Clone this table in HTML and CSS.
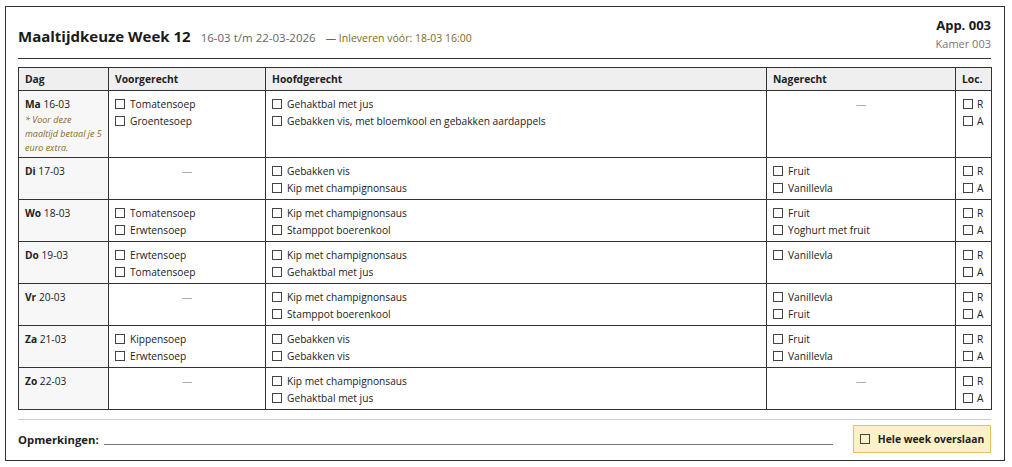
FILE: index.html
```html
<!DOCTYPE html>
<html lang="nl">
<head>
<meta charset="utf-8">
<title>Maaltijdkeuze Week 12</title>
<link rel="stylesheet" href="styles.css">
</head>
<body>
<div class="sheet">
  <header class="head">
    <div class="head-left">
      <h1 class="title">Maaltijdkeuze Week 12</h1>
      <span class="range">16-03 t/m 22-03-2026</span>
      <span class="deadline">— Inleveren vóór: 18-03 16:00</span>
    </div>
    <div class="head-right">
      <div class="app">App. 003</div>
      <div class="room">Kamer 003</div>
    </div>
  </header>

  <table class="menu">
    <colgroup>
      <col class="c-day"><col class="c-voor"><col class="c-hoofd"><col class="c-na"><col class="c-loc">
    </colgroup>
    <thead>
      <tr><th>Dag</th><th>Voorgerecht</th><th>Hoofdgerecht</th><th>Nagerecht</th><th>Loc.</th></tr>
    </thead>
    <tbody>
      <tr>
        <td class="day"><b>Ma</b> 16-03<div class="note">* Voor deze maaltijd betaal je 5 euro extra.</div></td>
        <td><div class="opt"><span class="box"></span>Tomatensoep</div><div class="opt"><span class="box"></span>Groentesoep</div></td>
        <td><div class="opt"><span class="box"></span>Gehaktbal met jus</div><div class="opt"><span class="box"></span>Gebakken vis, met bloemkool en gebakken aardappels</div></td>
        <td class="empty">—</td>
        <td class="loc"><div class="opt"><span class="box"></span>R</div><div class="opt"><span class="box"></span>A</div></td>
      </tr>
      <tr>
        <td class="day"><b>Di</b> 17-03</td>
        <td class="empty">—</td>
        <td><div class="opt"><span class="box"></span>Gebakken vis</div><div class="opt"><span class="box"></span>Kip met champignonsaus</div></td>
        <td><div class="opt"><span class="box"></span>Fruit</div><div class="opt"><span class="box"></span>Vanillevla</div></td>
        <td class="loc"><div class="opt"><span class="box"></span>R</div><div class="opt"><span class="box"></span>A</div></td>
      </tr>
      <tr>
        <td class="day"><b>Wo</b> 18-03</td>
        <td><div class="opt"><span class="box"></span>Tomatensoep</div><div class="opt"><span class="box"></span>Erwtensoep</div></td>
        <td><div class="opt"><span class="box"></span>Kip met champignonsaus</div><div class="opt"><span class="box"></span>Stamppot boerenkool</div></td>
        <td><div class="opt"><span class="box"></span>Fruit</div><div class="opt"><span class="box"></span>Yoghurt met fruit</div></td>
        <td class="loc"><div class="opt"><span class="box"></span>R</div><div class="opt"><span class="box"></span>A</div></td>
      </tr>
      <tr>
        <td class="day"><b>Do</b> 19-03</td>
        <td><div class="opt"><span class="box"></span>Erwtensoep</div><div class="opt"><span class="box"></span>Tomatensoep</div></td>
        <td><div class="opt"><span class="box"></span>Kip met champignonsaus</div><div class="opt"><span class="box"></span>Gehaktbal met jus</div></td>
        <td><div class="opt"><span class="box"></span>Vanillevla</div></td>
        <td class="loc"><div class="opt"><span class="box"></span>R</div><div class="opt"><span class="box"></span>A</div></td>
      </tr>
      <tr>
        <td class="day"><b>Vr</b> 20-03</td>
        <td class="empty">—</td>
        <td><div class="opt"><span class="box"></span>Kip met champignonsaus</div><div class="opt"><span class="box"></span>Stamppot boerenkool</div></td>
        <td><div class="opt"><span class="box"></span>Vanillevla</div><div class="opt"><span class="box"></span>Fruit</div></td>
        <td class="loc"><div class="opt"><span class="box"></span>R</div><div class="opt"><span class="box"></span>A</div></td>
      </tr>
      <tr>
        <td class="day"><b>Za</b> 21-03</td>
        <td><div class="opt"><span class="box"></span>Kippensoep</div><div class="opt"><span class="box"></span>Erwtensoep</div></td>
        <td><div class="opt"><span class="box"></span>Gebakken vis</div><div class="opt"><span class="box"></span>Gebakken vis</div></td>
        <td><div class="opt"><span class="box"></span>Fruit</div><div class="opt"><span class="box"></span>Vanillevla</div></td>
        <td class="loc"><div class="opt"><span class="box"></span>R</div><div class="opt"><span class="box"></span>A</div></td>
      </tr>
      <tr>
        <td class="day"><b>Zo</b> 22-03</td>
        <td class="empty">—</td>
        <td><div class="opt"><span class="box"></span>Kip met champignonsaus</div><div class="opt"><span class="box"></span>Gehaktbal met jus</div></td>
        <td class="empty">—</td>
        <td class="loc"><div class="opt"><span class="box"></span>R</div><div class="opt"><span class="box"></span>A</div></td>
      </tr>
    </tbody>
  </table>

  <footer class="foot">
    <span class="rem-label">Opmerkingen:</span>
    <span class="rem-line"></span>
    <div class="skip"><span class="box"></span>Hele week overslaan</div>
  </footer>
</div>
</body>
</html>
```
FILE: styles.css
```css
* { box-sizing: border-box; }
html, body { margin: 0; padding: 0; background: #fff; }
body {
  font-family: "Open Sans", "Noto Sans", sans-serif;
  color: #222;
  font-size: 10.2px;
}
.sheet {
  margin: 6px 0 0 5px;
  width: 1000px;
  height: 455px;
  border: 1px solid #333;
  padding: 0 13px 0 12px;
  display: flex;
  flex-direction: column;
}
.head {
  display: flex;
  justify-content: space-between;
  align-items: flex-start;
  border-bottom: 1px solid #333;
  height: 52px;
  flex: none;
}
.head-left {
  display: flex;
  align-items: baseline;
  gap: 10px;
  padding-top: 19px;
}
.title {
  margin: 0;
  font-size: 15px;
  font-weight: 700;
  color: #1a1a1a;
}
.range { font-size: 11.5px; color: #666; }
.deadline { font-size: 10.5px; color: #7f6a1c; }
.head-right {
  text-align: right;
  padding-top: 9px;
}
.app { font-size: 13px; font-weight: 700; line-height: 18px; color: #1a1a1a; }
.room { font-size: 11px; color: #777; line-height: 16px; margin-top: 2px; }

.menu {
  margin-top: 8px;
  width: 973px;
  border-collapse: collapse;
  table-layout: fixed;
  border: 1px solid #333;
  flex: none;
}
.c-day { width: 90px; }
.c-voor { width: 157px; }
.c-hoofd { width: 501px; }
.c-na { width: 189px; }
.c-loc { width: 36px; }
.menu th {
  background: #efefef;
  border: 1px solid #333;
  text-align: left;
  font-weight: 700;
  font-size: 10.3px;
  height: 23px;
  padding: 0 6px;
  color: #222;
}
.menu td {
  border: 1px solid #333;
  vertical-align: top;
  padding: 5px 6px 2px;
  height: 41px;
  line-height: 17px;
}
.menu td.day { background: #f7f7f7; }
.note {
  font-style: italic;
  font-size: 9px;
  line-height: 14px;
  color: #8a6a10;
}
.menu td.empty { text-align: center; color: #aaa; }
.menu td.loc { padding-left: 7px; padding-right: 2px; }
.opt { white-space: nowrap; }
.box {
  display: inline-block;
  width: 10px;
  height: 10px;
  border: 1px solid #444;
  margin-right: 5px;
  vertical-align: -1px;
}
.loc .box { margin-right: 4px; }

.foot {
  margin-top: 9px;
  border-top: 1px solid #ccc;
  display: flex;
  align-items: center;
  padding: 5px 0 0;
  flex: none;
}
.rem-label { font-weight: 700; font-size: 11.3px; color: #222; }
.rem-line {
  flex: 1;
  border-bottom: 1px solid #777;
  margin: 10px 20px 0 5px;
  height: 1px;
}
.skip {
  background: #fdf1c8;
  border: 1px solid #e2c25a;
  height: 28px;
  width: 138px;
  display: flex;
  align-items: center;
  justify-content: center;
  font-weight: 700;
  font-size: 10.3px;
  color: #222;
}
.skip .box { margin-right: 8px; }
```
